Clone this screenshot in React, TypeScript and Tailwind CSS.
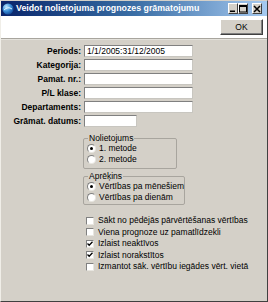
import React from "react"

const fields = [
  { label: "Periods:", value: "1/1/2005:31/12/2005", wide: true },
  { label: "Kategorija:", value: "", wide: true },
  { label: "Pamat. nr.:", value: "", wide: true },
  { label: "P/L klase:", value: "", wide: true },
  { label: "Departaments:", value: "", wide: true },
  { label: "Grāmat. datums:", value: "", wide: false },
]

const checks = [
  { label: "Sākt no pēdējās pārvērtēšanas vērtības", checked: false },
  { label: "Viena prognoze uz pamatlīdzekli", checked: false },
  { label: "Izlaist neaktīvos", checked: true },
  { label: "Izlaist norakstītos", checked: true },
  { label: "Izmantot sāk. vērtību iegādes vērt. vietā", checked: false },
]

function Radio({ label, checked }: { label: string; checked?: boolean }) {
  return (
    <div className="flex h-[11px] items-center">
      <span className="ml-[3px] flex h-[9px] w-[9px] items-center justify-center rounded-full border border-t-[#808080] border-l-[#808080] border-r-[#e8e6e0] border-b-[#e8e6e0] bg-white">
        {checked && <span className="h-[3px] w-[3px] rounded-full bg-black" />}
      </span>
      <span className="ml-[3px] whitespace-nowrap">{label}</span>
    </div>
  )
}

function Check({ label, checked }: { label: string; checked?: boolean }) {
  return (
    <div className="flex h-[11.5px] items-center">
      <span className="flex h-[8px] w-[8px] items-center justify-center border border-t-[#808080] border-l-[#808080] border-r-[#e8e6e0] border-b-[#e8e6e0] bg-white">
        {checked && (
          <svg width="6" height="6" viewBox="0 0 6 6">
            <path d="M0.5 2.5 L2.2 4.3 L5.5 0.8" stroke="#000" strokeWidth="1.3" fill="none" />
          </svg>
        )}
      </span>
      <span className="ml-[4px] whitespace-nowrap">{label}</span>
    </div>
  )
}

function TitleButton({ kind }: { kind: "min" | "max" | "close" }) {
  return (
    <div className="flex h-[11px] w-[10px] items-center justify-center border border-t-white border-l-white border-r-[#404040] border-b-[#404040] bg-[#d4d0c8]">
      <svg width="8" height="8" viewBox="0 0 8 8">
        {kind === "min" && <rect x="1" y="5.5" width="5" height="1.5" fill="#000" />}
        {kind === "max" && (
          <>
            <rect x="0.5" y="0.5" width="7" height="6.5" fill="none" stroke="#000" strokeWidth="1" />
            <rect x="0.5" y="0.5" width="7" height="1.5" fill="#000" />
          </>
        )}
        {kind === "close" && (
          <path d="M1 1 L7 7 M7 1 L1 7" stroke="#000" strokeWidth="1.5" />
        )}
      </svg>
    </div>
  )
}

export default function App() {
  return (
    <div className="h-[302px] w-[268px] overflow-hidden bg-[#d4d0c8] font-['Liberation_Sans',Arial,sans-serif] text-[8.5px] text-black">
      <div className="flex h-full flex-col border border-t-[#d4d0c8] border-l-[#f0eee8] border-r-[#404040] border-b-[#404040]">
        {/* title bar */}
        <div className="flex h-[15px] items-center bg-gradient-to-r from-[#0a246a] via-[#3a6ea5] to-[#a6caf0]">
          <svg className="ml-[1px]" width="12" height="12" viewBox="0 0 12 12">
            <defs>
              <radialGradient id="ic" cx="0.35" cy="0.3" r="0.8">
                <stop offset="0" stopColor="#bfe8ff" />
                <stop offset="0.5" stopColor="#3a8fd8" />
                <stop offset="1" stopColor="#0b3d8c" />
              </radialGradient>
            </defs>
            <circle cx="6" cy="6" r="5.5" fill="url(#ic)" />
            <path d="M2 7 Q6 3 10 6" stroke="#e0f4ff" strokeWidth="1" fill="none" />
          </svg>
          <span className="ml-[2px] whitespace-nowrap text-[8.8px] font-bold text-white">
            Veidot nolietojuma prognozes grāmatojumu
          </span>
          <div className="ml-auto mr-[5px] flex items-center">
            <TitleButton kind="min" />
            <TitleButton kind="max" />
            <div className="w-[4px]" />
            <TitleButton kind="close" />
          </div>
        </div>

        {/* toolbar */}
        <div className="flex h-[22px] items-center justify-end bg-white pr-[4px]">
          <button className="flex h-[16px] w-[43px] items-center justify-center border border-t-white border-l-white border-r-[#404040] border-b-[#404040] bg-[#d4d0c8] text-[8.5px] shadow-[inset_-1px_-1px_0_#808080]">
            OK
          </button>
        </div>
        <div className="h-[2px] border-t border-[#a8a59e] bg-[#e4e2dc]" />

        {/* body */}
        <div className="flex flex-col pt-[5px]">
          <div className="flex flex-col gap-[2px]">
            {fields.map((f) => (
              <div key={f.label} className="flex h-[12px] items-center">
                <div className="w-[80px] text-right font-bold whitespace-nowrap">{f.label}</div>
                <div
                  className={
                    "ml-[3px] flex h-[12px] items-center border border-t-[#808080] border-l-[#808080] border-r-[#c8c6c0] border-b-[#c8c6c0] bg-white pl-[2px] " +
                    (f.wide ? "w-[109px]" : "w-[53px]")
                  }
                >
                  {f.value}
                </div>
              </div>
            ))}
          </div>

          <div className="ml-[82px] mt-[6px] flex w-[94px] flex-col gap-[2px]">
            <fieldset className="rounded-[2px] border border-[#a8a59e] pb-[3px]">
              <legend className="ml-[4px] px-[1px] leading-[10px]">Nolietojums</legend>
              <Radio label="1. metode" checked />
              <Radio label="2. metode" />
            </fieldset>
            <fieldset className="rounded-[2px] border border-[#a8a59e] pb-[1px]">
              <legend className="ml-[4px] px-[1px] leading-[10px]">Aprēķins</legend>
              <Radio label="Vērtības pa mēnešiem" checked />
              <Radio label="Vērtības pa dienām" />
            </fieldset>
          </div>

          <div className="ml-[85px] mt-[10px] flex flex-col">
            {checks.map((c) => (
              <Check key={c.label} label={c.label} checked={c.checked} />
            ))}
          </div>
        </div>
      </div>
    </div>
  )
}
